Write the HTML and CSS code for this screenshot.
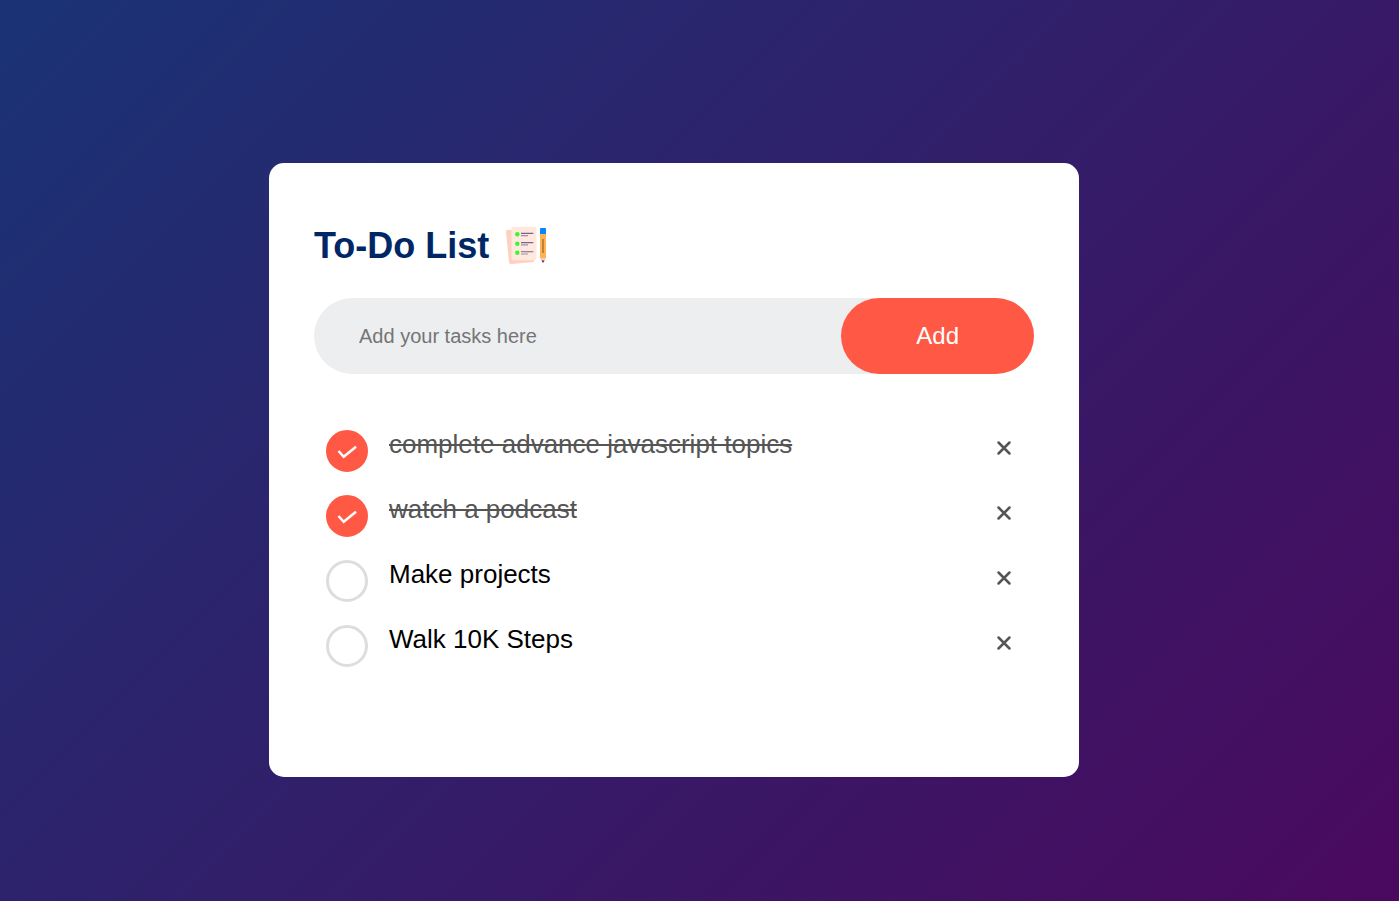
FILE: index.html
```html
<!DOCTYPE html>
<html lang="en">
<head>
<meta charset="utf-8">
<meta name="viewport" content="width=device-width, initial-scale=1">
<title>To-Do List</title>
<link rel="stylesheet" href="styles.css">
</head>
<body>
<main class="page">
  <section class="card">
    <h1 class="title">To-Do List
      <svg class="title-icon" viewBox="0 0 45 45" aria-hidden="true">
        <path d="M3 7h24l3 32-23 2q-2 0-2-2L2 9q0-2 1-2z" fill="#ffd0c2"/>
        <rect x="7.500" y="3.700" width="25" height="33.600" rx="2" fill="#ffe9de"/>
        <g fill="#3cf62e"><circle cx="13.300" cy="11.300" r="2.200"/><circle cx="13.300" cy="20.700" r="2.200"/><circle cx="13.300" cy="29.700" r="2.200"/></g>
        <path d="M17 10.400h12.300M17 19.600h12.300M17 28.800h12.300" stroke="#7b6090" stroke-width="1.100"/>
        <path d="M17 12.600h7M17 21.900h7M17 31h7" stroke="#a58baa" stroke-width="1.100"/>
        <path d="M36 11h6v24h-6z" fill="#ffb350"/>
        <path d="M36 6q0-1 1-1h4q1 0 1 1v5h-6z" fill="#0884ff"/>
        <path d="M39 16v14" stroke="#ad7638" stroke-width="1.600"/>
        <path d="M36 35h6l-1.500 3h-3z" fill="#ffc4c8"/>
        <path d="M37.500 37.500h3L39 40z" fill="#493a40"/>
      </svg>
    </h1>
    <form class="entry">
      <input class="entry-input" type="text" placeholder="Add your tasks here" aria-label="New task">
      <button class="entry-add" type="button">Add</button>
    </form>
    <ul class="tasks">
      <li class="task">
        <span class="check"><input class="check-box" type="checkbox" id="task-1" checked><svg class="check-mark" viewBox="0 0 42 42" aria-hidden="true"><path d="M12.500 21l5.200 5.800L30 16.700"/></svg></span>
        <label class="task-label" for="task-1">complete advance javascript topics</label>
        <button class="remove" type="button" aria-label="Remove complete advance javascript topics"><svg class="remove-icon" viewBox="0 0 16 16" aria-hidden="true"><path d="M2.500 2.500l11 11M13.500 2.500l-11 11"/></svg></button>
      </li>
      <li class="task">
        <span class="check"><input class="check-box" type="checkbox" id="task-2" checked><svg class="check-mark" viewBox="0 0 42 42" aria-hidden="true"><path d="M12.500 21l5.200 5.800L30 16.700"/></svg></span>
        <label class="task-label" for="task-2">watch a podcast</label>
        <button class="remove" type="button" aria-label="Remove watch a podcast"><svg class="remove-icon" viewBox="0 0 16 16" aria-hidden="true"><path d="M2.500 2.500l11 11M13.500 2.500l-11 11"/></svg></button>
      </li>
      <li class="task">
        <span class="check"><input class="check-box" type="checkbox" id="task-3"><svg class="check-mark" viewBox="0 0 42 42" aria-hidden="true"><path d="M12.500 21l5.200 5.800L30 16.700"/></svg></span>
        <label class="task-label" for="task-3">Make projects</label>
        <button class="remove" type="button" aria-label="Remove Make projects"><svg class="remove-icon" viewBox="0 0 16 16" aria-hidden="true"><path d="M2.500 2.500l11 11M13.500 2.500l-11 11"/></svg></button>
      </li>
      <li class="task">
        <span class="check"><input class="check-box" type="checkbox" id="task-4"><svg class="check-mark" viewBox="0 0 42 42" aria-hidden="true"><path d="M12.500 21l5.200 5.800L30 16.700"/></svg></span>
        <label class="task-label" for="task-4">Walk 10K Steps</label>
        <button class="remove" type="button" aria-label="Remove Walk 10K Steps"><svg class="remove-icon" viewBox="0 0 16 16" aria-hidden="true"><path d="M2.500 2.500l11 11M13.500 2.500l-11 11"/></svg></button>
      </li>
    </ul>
  </section>
</main>
</body>
</html>
```

FILE: styles.css
```css
* {
  box-sizing: border-box;
  margin: 0;
  padding: 0;
}

body,
input,
button {
  font-family: "Liberation Sans", Arial, sans-serif;
}

.page {
  min-height: 100vh;
  padding: 163px 66px 60px 15px;
  background: linear-gradient(135deg, #1a3375, #4a095e);
}

.card {
  max-width: 810px;
  margin: 0 auto;
  padding: 60px 45px 110px;
  border-radius: 15px;
  background: #fff;
}

.title {
  display: flex;
  align-items: center;
  gap: 15px;
  margin-bottom: 30px;
  font-size: 36px;
  line-height: 45px;
  color: #002765;
}

.title-icon {
  width: 45px;
  height: 45px;
}

.entry {
  display: flex;
  margin-bottom: 56px;
  border-radius: 38px;
  background: #edeef0;
}

.entry-input {
  flex: 1;
  min-width: 0;
  padding-left: 45px;
  border: 0;
  outline: 0;
  background: transparent;
  font-size: 20px;
}

.entry-input::placeholder {
  color: #757575;
}

.entry-add {
  padding: 24px 75px;
  border: 0;
  border-radius: 38px;
  background: #ff5945;
  color: #fff;
  font-size: 24px;
  line-height: 28px;
}

.tasks {
  display: grid;
  gap: 23px;
  padding: 0 12px;
  list-style: none;
}

.task {
  display: grid;
  grid-template-columns: 42px 1fr 36px;
  align-items: start;
}

.check {
  display: grid;
}

.check-box,
.check-mark {
  grid-area: 1 / 1;
  width: 42px;
  height: 42px;
}

.check-box {
  appearance: none;
  border: 3px solid #ddd;
  border-radius: 50%;
}

.check-box:checked {
  border-color: #ff5945;
  background: #ff5945;
}

.check-mark {
  visibility: hidden;
  pointer-events: none;
  fill: none;
  stroke: #fff;
  stroke-width: 2.5;
}

.check-box:checked + .check-mark {
  visibility: visible;
}

.task-label {
  padding-left: 21px;
  font-size: 26px;
  line-height: 29px;
  color: #000;
}

.task:has(.check-box:checked) .task-label {
  color: #555;
  text-decoration: line-through;
}

.remove {
  display: grid;
  place-items: center;
  height: 36px;
  border: 0;
  background: transparent;
}

.remove-icon {
  width: 16px;
  height: 16px;
  fill: none;
  stroke: #555;
  stroke-width: 2.5;
  stroke-linecap: round;
}
```
